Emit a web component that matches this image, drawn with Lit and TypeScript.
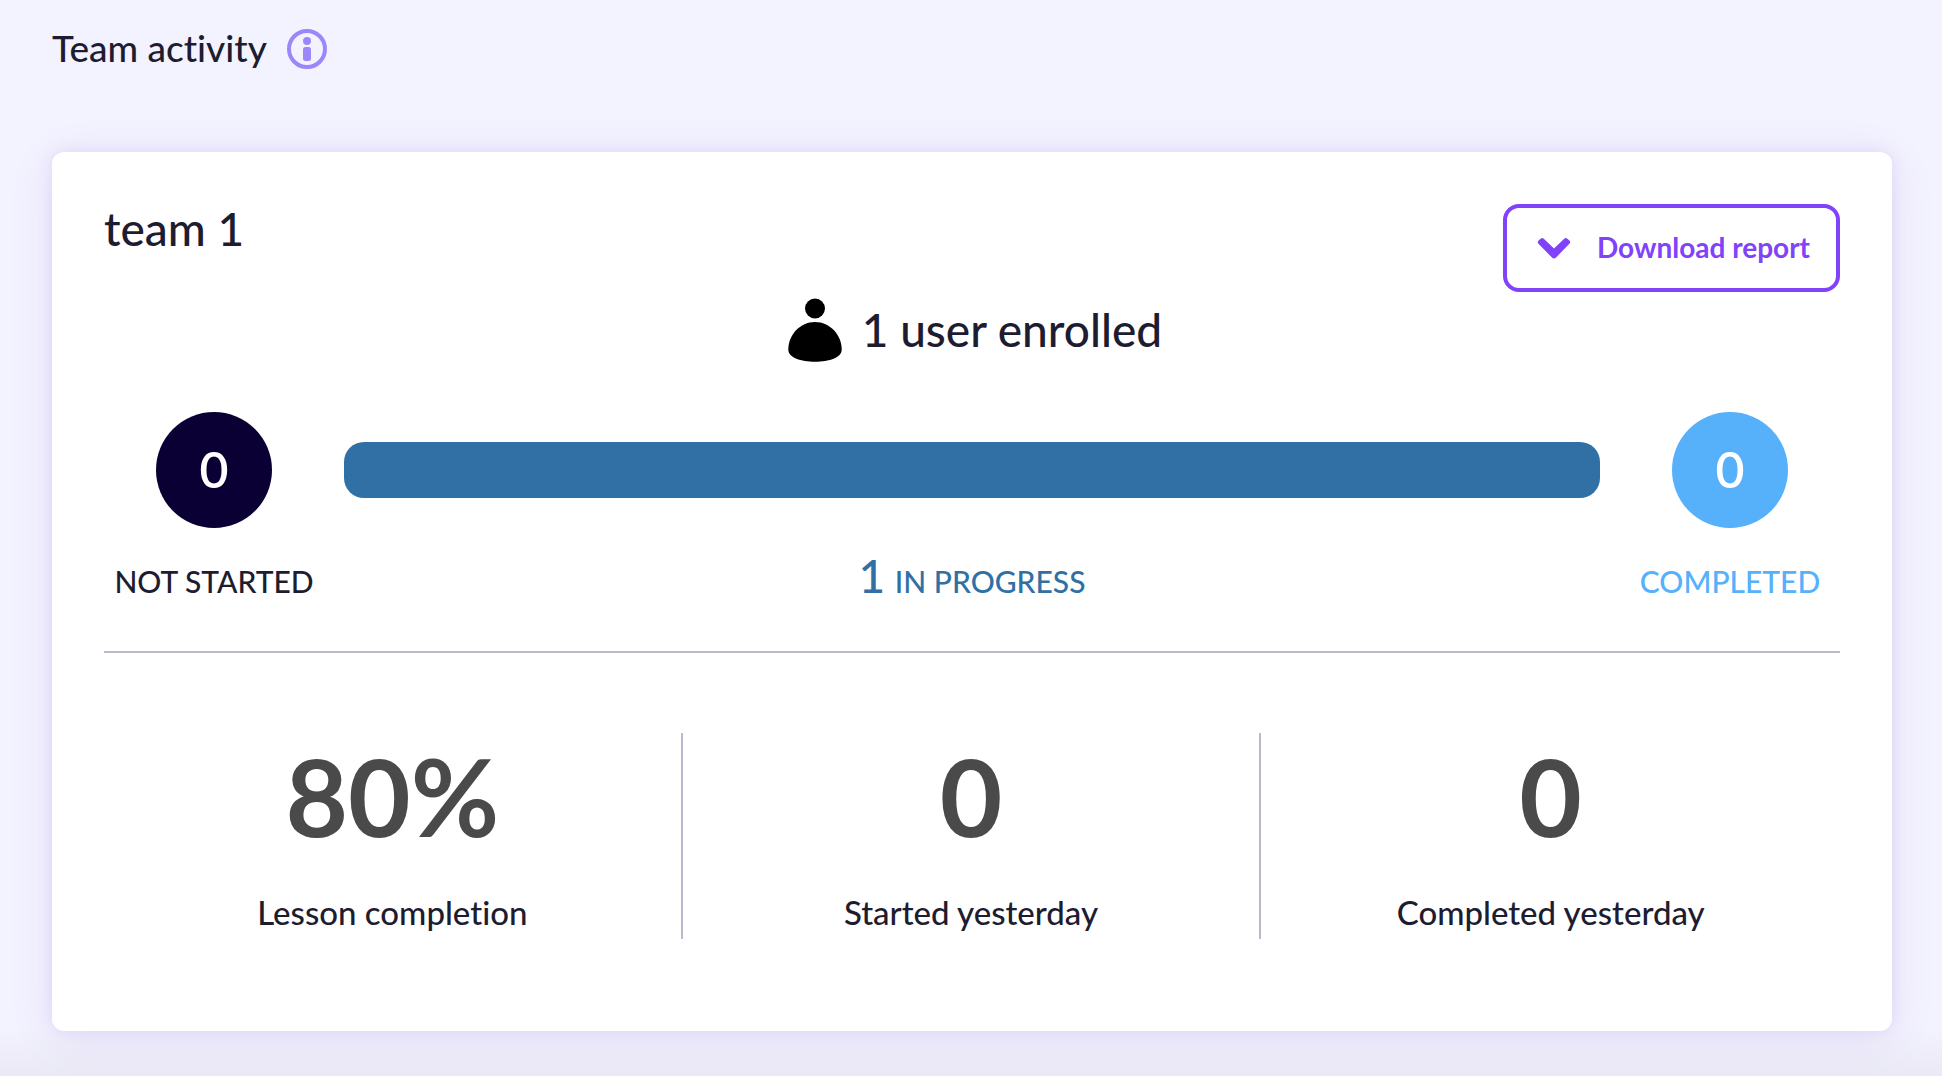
import { LitElement, html, css, svg } from "lit";
import { customElement, property } from "lit/decorators.js";

const infoIcon = svg`
  <circle cx="20" cy="20" r="18" fill="none" stroke="currentColor" stroke-width="4"/>
  <circle cx="20" cy="12" r="4" fill="currentColor"/>
  <rect x="16" y="18" width="8" height="14" rx="2.5" fill="currentColor"/>`;

const personIcon = svg`
  <circle cx="33" cy="10.500" r="10"/>
  <path d="M33 24C48 24 59.700 37 59.700 51.500C59.700 60 47 63.700 33 63.700S6.300 60 6.300 51.500C6.300 37 18 24 33 24Z"/>`;

@customElement("stat-tile")
export class StatTile extends LitElement {
  @property() value = "";
  @property() label = "";

  static styles = css`
    :host {
      display: flex;
      flex-direction: column;
      align-items: center;
      gap: 30px;
      padding-bottom: 2px;
    }
    .value {
      font-size: 108px;
      font-weight: 700;
      line-height: 124px;
      color: #4a4a4a;
    }
    .label {
      font-size: 33px;
      line-height: 50px;
    }
  `;

  render() {
    return html`
      <span class="value">${this.value}</span>
      <span class="label">${this.label}</span>
    `;
  }
}

@customElement("app-root")
export class AppRoot extends LitElement {
  static styles = css`
    :host {
      display: block;
      box-sizing: border-box;
      min-height: 100vh;
      padding: 29px 50px 45px 52px;
      background:
        linear-gradient(to top, rgba(60, 60, 40, 0.05), rgba(60, 60, 40, 0)) bottom / 100% 48px no-repeat,
        #f3f2ff;
      color: #1e1c30;
      font-family: Lato, "Liberation Sans", sans-serif;
      font-weight: 500;
      font-variant-ligatures: none;
    }
    .heading {
      display: flex;
      align-items: center;
      gap: 20px;
      margin-bottom: 83px;
    }
    .title {
      margin: 0;
      font-size: 37px;
      font-weight: 500;
      line-height: 38px;
      padding-bottom: 2px;
    }
    .info {
      display: flex;
      padding: 0;
      border: 0;
      background: none;
      color: #9b87fa;
    }
    .card {
      padding: 52px 52px 92px;
      border-radius: 12px;
      background: #fff;
      box-shadow: 0 8px 48px rgba(90, 50, 180, 0.08), 0 0 16px rgba(90, 50, 180, 0.1);
    }
    .top {
      display: flex;
      justify-content: space-between;
      align-items: flex-start;
    }
    .team {
      margin: 0;
      font-size: 46px;
      font-weight: 500;
      line-height: 50px;
    }
    .download {
      display: flex;
      align-items: center;
      gap: 26px;
      height: 88px;
      padding: 0 26px 2px 30px;
      border: 4px solid #8043f9;
      border-radius: 16px;
      background: #fff;
      color: #8043f9;
      font-family: inherit;
      font-size: 28px;
      font-weight: 700;
    }
    .chevron {
      margin-top: 4px;
    }
    .enrolled {
      display: flex;
      justify-content: center;
      align-items: center;
      gap: 16px;
      margin: 6px 0 50px;
      font-size: 46px;
      line-height: 64px;
    }
    .person {
      fill: #000;
    }
    .progress {
      display: grid;
      grid-template-columns: 220px 1fr 220px;
      column-gap: 20px;
      row-gap: 16px;
      align-items: center;
      justify-items: center;
      padding-bottom: 38px;
      border-bottom: 2px solid #bbb8cc;
    }
    .circle {
      display: flex;
      align-items: center;
      justify-content: center;
      box-sizing: border-box;
      width: 116px;
      height: 116px;
      padding-bottom: 2px;
      border-radius: 50%;
      color: #fff;
      font-size: 50px;
      font-weight: 600;
    }
    .circle.waiting {
      background: #0a0033;
    }
    .circle.done {
      background: #56b0fa;
    }
    .bar {
      justify-self: stretch;
      height: 56px;
      border-radius: 20px;
      background: #3070a5;
    }
    .state {
      align-self: baseline;
      font-size: 30px;
      line-height: 64px;
      white-space: nowrap;
    }
    .state.active {
      color: #3070a5;
    }
    .state.done {
      color: #56b0fa;
    }
    .count {
      margin-right: 2px;
      font-size: 46px;
    }
    .stats {
      display: grid;
      grid-template-columns: repeat(3, 1fr);
      margin-top: 80px;
    }
    .stat:not(:last-child) {
      border-right: 2px solid #bbb8cc;
    }
  `;

  render() {
    return html`
      <header class="heading">
        <h1 class="title">Team activity</h1>
        <button class="info" aria-label="About team activity">
          <svg width="40" height="40" viewBox="0 0 40 40" aria-hidden="true">${infoIcon}</svg>
        </button>
      </header>
      <section class="card">
        <div class="top">
          <h2 class="team">team 1</h2>
          <button class="download">
            <svg class="chevron" width="34" height="24" viewBox="0 0 34 24" aria-hidden="true">
              <path d="M1.200 6.500Q.2 5 1.400 3.800L3.600 1.700Q5.200.5 6.800 1.800L17 11.500 27.200 1.800Q28.800.5 30.400 1.700L32.600 3.800Q33.800 5 32.600 6.500L18.800 20.800Q17 22.400 15.200 20.800Z" fill="currentColor"/>
            </svg>
            <span>Download report</span>
          </button>
        </div>
        <div class="enrolled">
          <svg class="person" width="64" height="64" viewBox="0 0 64 64" aria-hidden="true">${personIcon}</svg>
          <span>1 user enrolled</span>
        </div>
        <div class="progress">
          <span class="circle waiting">0</span>
          <div class="bar"></div>
          <span class="circle done">0</span>
          <span class="state">NOT STARTED</span>
          <span class="state active"><span class="count">1</span> IN PROGRESS</span>
          <span class="state done">COMPLETED</span>
        </div>
        <div class="stats">
          <stat-tile class="stat" value="80%" label="Lesson completion"></stat-tile>
          <stat-tile class="stat" value="0" label="Started yesterday"></stat-tile>
          <stat-tile class="stat" value="0" label="Completed yesterday"></stat-tile>
        </div>
      </section>
    `;
  }
}
